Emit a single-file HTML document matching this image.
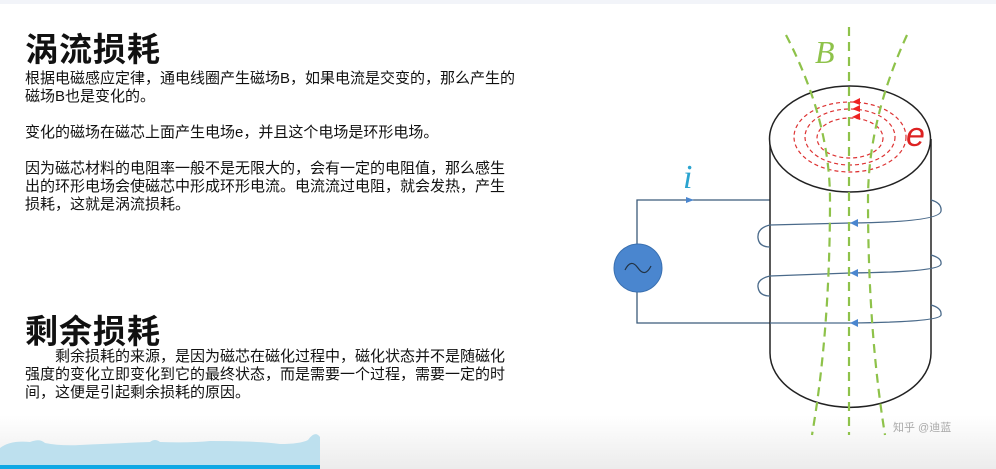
<!DOCTYPE html>
<html><head><meta charset="utf-8"><style>
html,body{margin:0;padding:0}
body{width:996px;height:469px;overflow:hidden;position:relative;background:#fff;font-family:"Liberation Sans","Noto Sans CJK SC",sans-serif;color:#111}
.t{position:absolute;left:25px;font-size:33px;font-weight:bold;letter-spacing:1px}
.p{position:absolute;left:25px;font-size:15px;line-height:18px;width:540px}
</style></head><body>
<div style="position:absolute;left:0;top:0;width:996px;height:4px;background:#f2f4f9"></div>
<div class="t" style="top:23px">涡流损耗</div>
<div class="p" style="top:70px">根据电磁感应定律，通电线圈产生磁场B，如果电流是交变的，那么产生的<br>磁场B也是变化的。<br><br>变化的磁场在磁芯上面产生电场e，并且这个电场是环形电场。<br><br>因为磁芯材料的电阻率一般不是无限大的，会有一定的电阻值，那么感生<br>出的环形电场会使磁芯中形成环形电流。电流流过电阻，就会发热，产生<br>损耗，这就是涡流损耗。</div>
<div class="t" style="top:305px">剩余损耗</div>
<div class="p" style="top:348px;width:520px">&emsp;&emsp;剩余损耗的来源，是因为磁芯在磁化过程中，磁化状态并不是随磁化<br>强度的变化立即变化到它的最终状态，而是需要一个过程，需要一定的时<br>间，这便是引起剩余损耗的原因。</div>
<div style="position:absolute;left:0;top:415px;width:996px;height:54px;background:linear-gradient(#fff,#ececec)"></div>
<svg style="position:absolute;left:0;top:0" width="996" height="469">
<path d="M0 469 L0 448 Q10 440 30 442 Q40 438 45 443 Q60 446 80 445 Q120 443 150 442 Q155 438 160 442 Q190 443 210 441 Q260 441 280 444 Q300 444 308 440 Q315 430 320 437 L320 469Z" fill="#bde0ee"/>
<rect x="0" y="465" width="320" height="4" fill="#0fa8e4"/>
<g fill="none" stroke="#3b5a7a" stroke-width="1.3">
<path d="M637 244 V200 H770"/><path d="M637 292 V323 H770"/>
</g>
<circle cx="638" cy="268" r="24" fill="#4a86cf" stroke="#3a70b0"/>
<path d="M625 270 Q631 258 638 268 Q645 278 651 266" fill="none" stroke="#234" stroke-width="1.2"/>
<path d="M694 200 l-8 -3 v6z" fill="#4a86cf"/>
<text x="683" y="188" font-family="Liberation Serif,serif" font-style="italic" font-size="34" fill="#2aa3cf">i</text>
<path d="M770 139 V353 A80 54 0 0 0 931 353 V139" fill="none" stroke="#222" stroke-width="1.5"/>
<ellipse cx="850" cy="139" rx="80.5" ry="53" fill="#fff" stroke="#222" stroke-width="1.5"/>
<g fill="none" stroke="#d33" stroke-width="1.2" stroke-dasharray="4 3">
<ellipse cx="850" cy="137" rx="56" ry="35"/><ellipse cx="850" cy="137" rx="45" ry="28"/><ellipse cx="850" cy="138" rx="33" ry="20"/>
</g>
<g fill="#e22"><path d="M852 102 l8 -4 v7z"/><path d="M852 109 l8 -4 v7z"/><path d="M852 117 l8 -4 v7z"/></g>
<text x="906" y="146" font-family="Liberation Sans,sans-serif" font-style="italic" font-size="34" fill="#d22">e</text>
<g fill="none" stroke="#4a6a8a" stroke-width="1.3">
<path d="M931 200 Q942 203 941 211 Q940 222 850 223 L770 225 Q757 228 758 238 Q759 247 770 247 M931 255 Q942 258 941 264 Q940 272 850 273 L770 276 Q757 279 758 287 Q759 296 770 296 M931 305 Q942 308 941 315 Q940 322 850 323 L770 323"/>
</g>
<g fill="#4a86cf"><path d="M850 223 l8 -4 v8z"/><path d="M850 273 l8 -4 v8z"/><path d="M850 323 l8 -4 v8z"/></g>
<g fill="none" stroke="#8ec24a" stroke-width="2.2" stroke-dasharray="9 6">
<path d="M849 27 V435"/>
<path d="M786 35 Q830 120 830 200 Q830 330 812 435"/>
<path d="M907 35 Q868 120 868 200 Q868 330 885 435"/>
</g>
<text x="815" y="63" font-family="Liberation Serif,serif" font-style="italic" font-size="32" fill="#8ec24a">B</text>
<text x="893" y="431" font-size="11" fill="#aaa" font-family="Liberation Sans,Noto Sans CJK SC,sans-serif">知乎 @迪蓝</text>
</svg>
</body></html>
